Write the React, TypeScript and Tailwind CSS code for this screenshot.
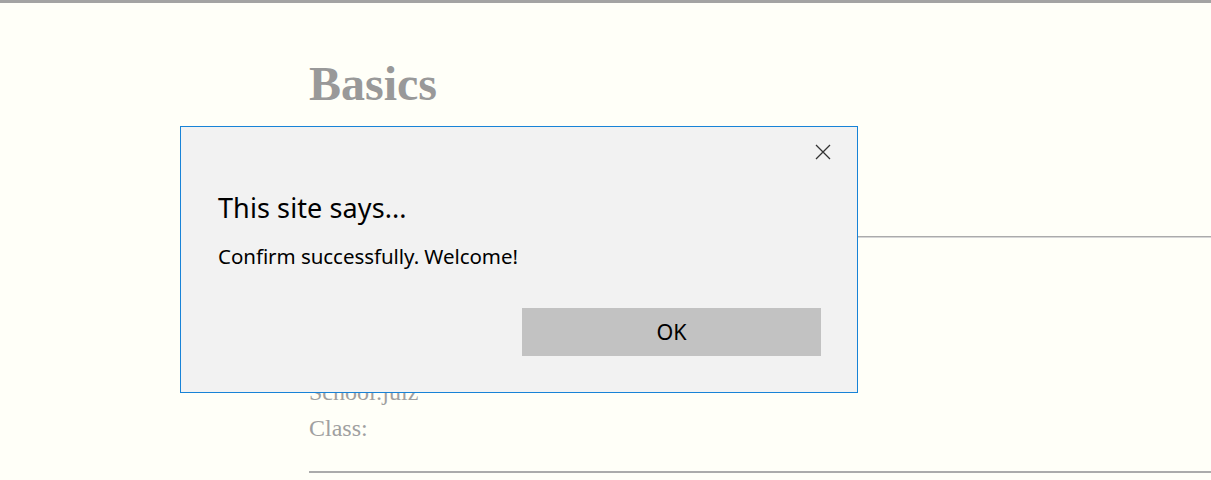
import React from "react";

export default function App() {
  return (
    <div className="relative w-[1211px] h-[480px] overflow-hidden bg-[#fffff8]">
      <div className="h-[3px] bg-[#a3a3a3]" />
      <div className="ml-[309px] text-[#a0a0a0]" style={{ fontFamily: '"Liberation Serif", serif' }}>
        <h1 className="mt-[53px] text-[48px] font-bold leading-[56px] text-[#999999]">Basics</h1>
        <div className="h-[124px]" />
        <div className="h-[2px] bg-[#ababab] border-b border-[#d6d6d6]" />
        <div className="h-[136px]" />
        <div className="text-[24px] leading-[36px]">School:juiz</div>
        <div className="text-[24px] leading-[36px]">Class:</div>
        <div className="h-[25px]" />
        <div className="h-[2px] bg-[#ababab]" />
      </div>

      <div
        className="absolute left-[180px] top-[126px] w-[678px] h-[267px] border border-[#1883d7] bg-[#f2f2f2] flex flex-col"
        style={{ fontFamily: '"Noto Sans", sans-serif' }}
      >
        <div className="flex justify-end pt-[17px] pr-[26px]">
          <svg width="16" height="16" viewBox="0 0 16 16" className="block">
            <path d="M1 1L15 15M15 1L1 15" stroke="#333" strokeWidth="1.3" />
          </svg>
        </div>
        <div className="pl-[37px] mt-[30px] text-[27px] leading-[36px] text-black tracking-[0.1px]">This site says...</div>
        <div className="pl-[37px] mt-[16px] text-[20.5px] leading-[28px] text-black tracking-[-0.05px]">Confirm successfully. Welcome!</div>
        <div className="flex justify-end pr-[36px] mt-[38px]">
          <div className="w-[299px] h-[48px] bg-[#c2c2c2] flex items-center justify-center text-[21.5px] text-black">OK</div>
        </div>
      </div>
    </div>
  );
}
